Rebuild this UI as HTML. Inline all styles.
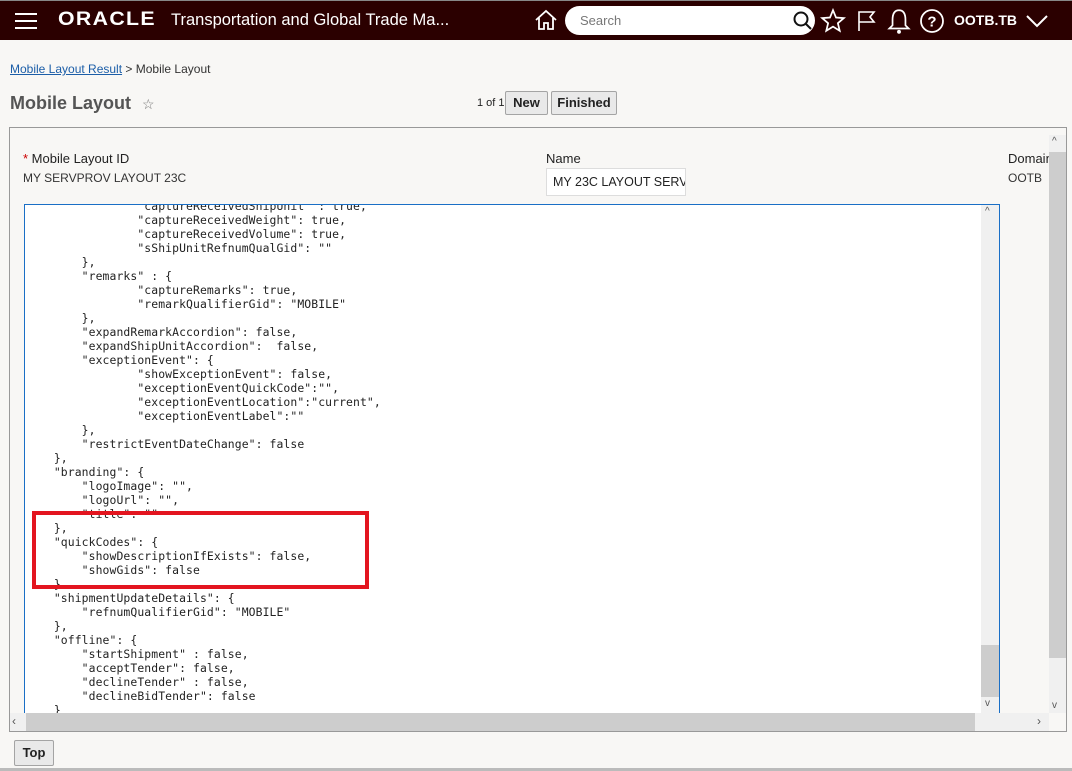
<!DOCTYPE html>
<html><head><meta charset="utf-8"><style>
*{box-sizing:border-box;margin:0;padding:0}
body{width:1072px;height:771px;background:#f8f7f5;font-family:"Liberation Sans",sans-serif;position:relative;overflow:hidden}
.hdr{position:absolute;left:0;top:0;width:1072px;height:40px;background:#2b0000;border-top:1px solid #888}
.abs{position:absolute}
.code{position:absolute;left:26px;top:199px;font-family:"DejaVu Sans Mono","Liberation Mono",monospace;font-size:11.4px;line-height:14px;color:#222;white-space:pre;letter-spacing:0.1px}
.btn{position:absolute;height:24px;border:1px solid #a4a4a4;background:#e9e9e9;font-size:13px;font-weight:bold;color:#222;text-align:center;line-height:22px;border-radius:2px}
</style></head><body>
<div class="hdr">
 <div class="abs" style="left:15px;top:12px;width:22px;height:2px;background:#fff"></div>
 <div class="abs" style="left:15px;top:19px;width:22px;height:2px;background:#fff"></div>
 <div class="abs" style="left:15px;top:26px;width:22px;height:2px;background:#fff"></div>
 <div class="abs" style="left:58px;top:8px;color:#fff;font-size:19px;font-weight:bold;letter-spacing:1.2px;transform:scaleX(1.12);transform-origin:left">ORACLE</div>
 <div class="abs" style="left:171px;top:10px;color:#fff;font-size:16.5px">Transportation and Global Trade Ma...</div>
 <svg class="abs" style="left:533px;top:7px" width="26" height="24" viewBox="0 0 26 24" fill="none" stroke="#fff" stroke-width="1.8"><path d="M3 12 L13 3 L23 12 M6 10 V21 H11 V15 H15 V21 H20 V10"/></svg>
 <div class="abs" style="left:565px;top:5px;width:250px;height:29px;background:#fff;border-radius:15px"></div>
 <div class="abs" style="left:580px;top:12px;color:#777;font-size:13px">Search</div>
 <svg class="abs" style="left:792px;top:9px" width="22" height="22" viewBox="0 0 22 22" fill="none" stroke="#111" stroke-width="2"><circle cx="9" cy="9" r="6.5"/><path d="M14 14 L19 19"/></svg>
 <svg class="abs" style="left:820px;top:7px" width="26" height="26" viewBox="0 0 24 24" fill="none" stroke="#fff" stroke-width="1.6"><path d="M12 2 L14.8 8.8 L22 9.3 L16.5 14 L18.2 21 L12 17.2 L5.8 21 L7.5 14 L2 9.3 L9.2 8.8 Z"/></svg>
 <svg class="abs" style="left:855px;top:8px" width="24" height="24" viewBox="0 0 24 24" fill="none" stroke="#fff" stroke-width="1.6"><path d="M4 22 V3 H19 L15 8 L19 13 H4"/></svg>
 <svg class="abs" style="left:886px;top:6px" width="26" height="28" viewBox="0 0 24 26" fill="none" stroke="#fff" stroke-width="1.6"><path d="M12 3 C7 3 6 8 6 12 V17 L3 20 H21 L18 17 V12 C18 8 17 3 12 3 Z"/><circle cx="12" cy="23" r="1" fill="#fff"/></svg>
 <svg class="abs" style="left:919px;top:7px" width="26" height="26" viewBox="0 0 26 26" fill="none" stroke="#fff" stroke-width="1.8"><circle cx="13" cy="13" r="11"/><text x="13" y="18.5" fill="#fff" stroke="none" font-size="15" font-weight="bold" text-anchor="middle" font-family="Liberation Sans">?</text></svg>
 <div class="abs" style="left:954px;top:11px;color:#fff;font-size:14px;font-weight:bold">OOTB.TB</div>
 <svg class="abs" style="left:1025px;top:10px" width="24" height="20" viewBox="0 0 24 20" fill="none" stroke="#fff" stroke-width="2"><path d="M2 5 L12 15 L22 5"/></svg>
</div>
<div class="abs" style="left:10px;top:62px;font-size:12px;color:#333"><span style="color:#1c5ea8;text-decoration:underline">Mobile Layout Result</span> &gt; Mobile Layout</div>
<div class="abs" style="left:10px;top:93px;font-size:18px;font-weight:bold;color:#555">Mobile Layout <span style="font-size:14px;font-weight:normal;color:#777;margin-left:6px">☆</span></div>
<div class="abs" style="left:477px;top:97px;font-size:11px;color:#222">1 of 1</div>
<div class="btn" style="left:505px;top:91px;width:43px">New</div>
<div class="btn" style="left:551px;top:91px;width:66px">Finished</div>
<div class="abs" style="left:9px;top:127px;width:1058px;height:605px;border:1px solid #999;background:#f8f7f5"></div>
<div class="abs" style="left:23px;top:151px;font-size:13px;color:#222"><span style="color:#c00">*</span> Mobile Layout ID</div>
<div class="abs" style="left:23px;top:171px;font-size:12px;color:#333">MY SERVPROV LAYOUT 23C</div>
<div class="abs" style="left:546px;top:151px;font-size:13px;color:#222">Name</div>
<div class="abs" style="left:546px;top:168px;width:140px;height:28px;border:1px solid #ddd;background:#fff;font-size:12.5px;line-height:27px;padding-left:6px;color:#222;overflow:hidden;white-space:nowrap">MY 23C LAYOUT SERV</div>
<div class="abs" style="left:1008px;top:151px;font-size:13px;color:#222;width:41px;overflow:hidden;white-space:nowrap">Domain</div>
<div class="abs" style="left:1008px;top:171px;font-size:12px;color:#333">OOTB</div>
<div class="abs" style="left:1049px;top:135px;width:17px;height:578px;background:#f0f0f0"></div>
<div class="abs" style="left:1049px;top:152px;width:17px;height:506px;background:#cdcdcd"></div>
<div class="abs" style="left:1052px;top:136px;font-size:10px;color:#555">^</div>
<div class="abs" style="left:1052px;top:700px;font-size:10px;color:#555">v</div>
<div class="abs" style="left:24px;top:204px;width:976px;height:510px;background:#fff;border:1px solid #1a6fc6;border-bottom:none;overflow:hidden">
</div>
<div class="code">                "captureReceivedShipUnit" : true,
                "captureReceivedWeight": true,
                "captureReceivedVolume": true,
                "sShipUnitRefnumQualGid": ""
        },
        "remarks" : {
                "captureRemarks": true,
                "remarkQualifierGid": "MOBILE"
        },
        "expandRemarkAccordion": false,
        "expandShipUnitAccordion":  false,
        "exceptionEvent": {
                "showExceptionEvent": false,
                "exceptionEventQuickCode":"",
                "exceptionEventLocation":"current",
                "exceptionEventLabel":""
        },
        "restrictEventDateChange": false
    },
    "branding": {
        "logoImage": "",
        "logoUrl": "",
        "title": ""
    },
    "quickCodes": {
        "showDescriptionIfExists": false,
        "showGids": false
    }
    "shipmentUpdateDetails": {
        "refnumQualifierGid": "MOBILE"
    },
    "offline": {
        "startShipment" : false,
        "acceptTender": false,
        "declineTender" : false,
        "declineBidTender": false
    }</div>
<div class="abs" style="left:25px;top:198px;width:974px;height:7px;background:#f8f7f5"></div>
<div class="abs" style="left:24px;top:204px;width:976px;height:1px;background:#1a6fc6"></div>
<div class="abs" style="left:981px;top:205px;width:18px;height:508px;background:#f0f0f0"></div>
<div class="abs" style="left:981px;top:645px;width:18px;height:52px;background:#cdcdcd"></div>
<div class="abs" style="left:985px;top:206px;font-size:10px;color:#555">^</div>
<div class="abs" style="left:985px;top:698px;font-size:10px;color:#555">v</div>
<div class="abs" style="left:10px;top:713px;width:1039px;height:18px;background:#f0f0f0"></div>
<div class="abs" style="left:26px;top:713px;width:949px;height:18px;background:#cdcdcd"></div>
<div class="abs" style="left:12px;top:714px;font-size:12px;color:#555">‹</div>
<div class="abs" style="left:1037px;top:714px;font-size:12px;color:#555">›</div>
<div class="abs" style="left:32px;top:511px;width:337px;height:78px;border:4px solid #e3151f"></div>
<div class="btn" style="left:14px;top:740px;width:40px;height:26px;line-height:24px">Top</div>
<div class="abs" style="left:0;top:768px;width:1072px;height:3px;background:#bbb"></div>
</body></html>
